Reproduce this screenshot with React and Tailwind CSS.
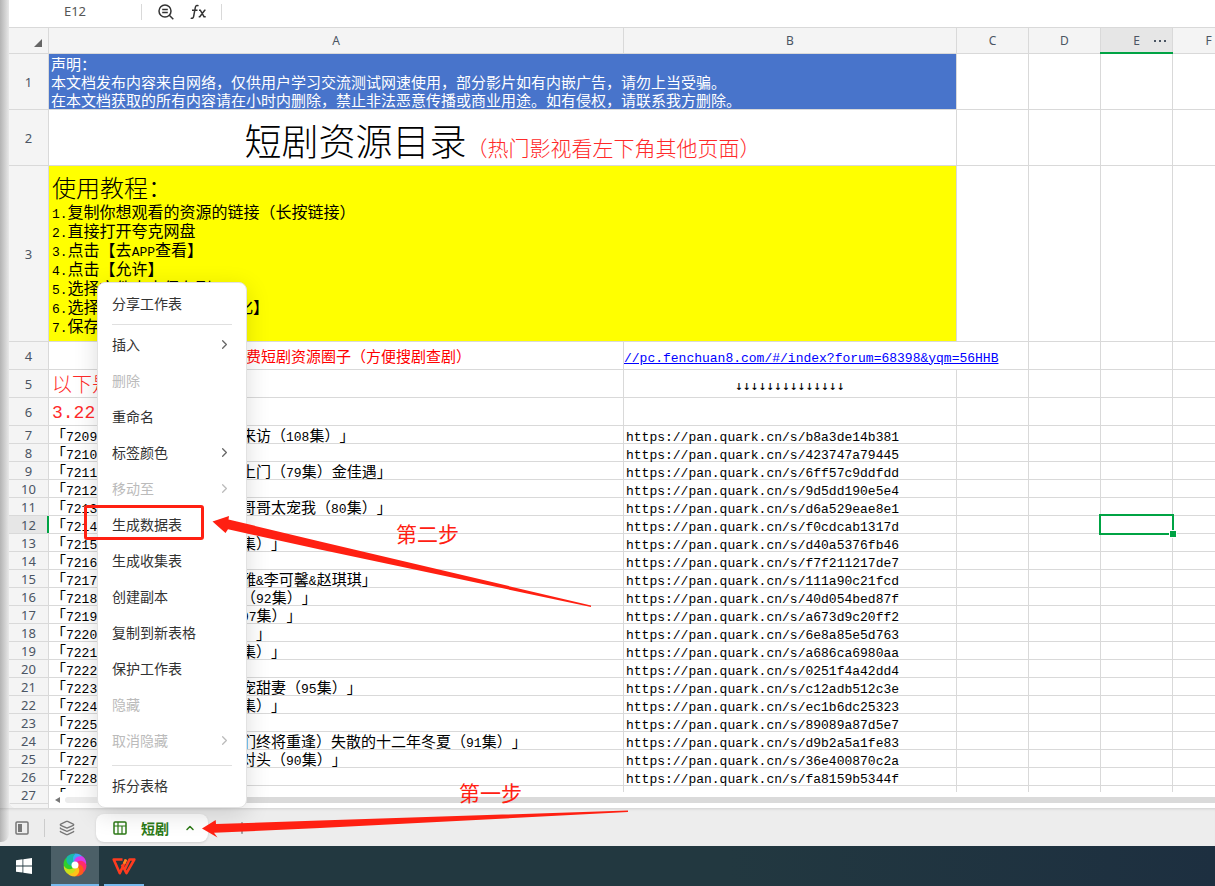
import { Fragment } from 'react'
import { ChevronRight, ChevronUp, Layers, Plus } from 'lucide-react'

const columns = ['C', 'D', 'E', 'F']

const records = [
  { row: 7, id: '7209', tail: '来访（108集）」', code: 'b8a3de14b381' },
  { row: 8, id: '7210', tail: '', code: '423747a79445' },
  { row: 9, id: '7211', tail: '上门（79集）金佳遇」', code: '6ff57c9ddfdd' },
  { row: 10, id: '7212', tail: '', code: '9d5dd190e5e4' },
  { row: 11, id: '7213', tail: '哥哥太宠我（80集）」', code: 'd6a529eae8e1' },
  { row: 12, id: '7214', tail: '', code: 'f0cdcab1317d' },
  { row: 13, id: '7215', tail: '集）」', code: 'd40a5376fb46' },
  { row: 14, id: '7216', tail: '', code: 'f7f211217de7' },
  { row: 15, id: '7217', tail: '雅&李可馨&赵琪琪」', code: '111a90c21fcd' },
  { row: 16, id: '7218', tail: '（92集）」', code: '40d054bed87f' },
  { row: 17, id: '7219', tail: '97集）」', code: 'a673d9c20ff2' },
  { row: 18, id: '7220', tail: '）」', code: '6e8a85e5d763' },
  { row: 19, id: '7221', tail: '集）」', code: 'a686ca6980aa' },
  { row: 20, id: '7222', tail: '」', code: '0251f4a42dd4' },
  { row: 21, id: '7223', tail: '宠甜妻（95集）」', code: 'c12adb512c3e' },
  { row: 22, id: '7224', tail: '集）」', code: 'ec1b6dc25323' },
  { row: 23, id: '7225', tail: '', code: '89089a87d5e7' },
  { row: 24, id: '7226', tail: '们终将重逢）失散的十二年冬夏（91集）」', code: 'd9b2a5a1fe83' },
  { row: 25, id: '7227', tail: '对头（90集）」', code: '36e400870c2a' },
  { row: 26, id: '7228', tail: '', code: 'fa8159b5344f' },
  { row: 27, id: '7229', tail: '」', code: '15f304434941' },
]

const menuGroups = [
  [{ label: '分享工作表' }],
  [
    { label: '插入', sub: true },
    { label: '删除', disabled: true },
    { label: '重命名' },
    { label: '标签颜色', sub: true },
    { label: '移动至', sub: true, disabled: true },
    { label: '生成数据表' },
    { label: '生成收集表' },
    { label: '创建副本' },
    { label: '复制到新表格' },
    { label: '保护工作表' },
    { label: '隐藏', disabled: true },
    { label: '取消隐藏', sub: true, disabled: true },
  ],
  [{ label: '拆分表格' }],
]

const cell = 'border-r border-b border-[#d9d9d9] p-0'
const mono = "font-['Liberation_Mono',monospace] text-[13px] leading-none"

// Latin runs are set smaller so two of them take the room of one Chinese character
function Mixed({ text }) {
  return text.split(/([\x20-\x7e]+)/).map((part, i) =>
    i % 2 ? (
      <span key={i} className={mono}>{part}</span>
    ) : (
      <Fragment key={i}>{part}</Fragment>
    )
  )
}

function RowHeader({ n, active }) {
  return (
    <th
      scope="row"
      className={`${cell} relative text-center font-['Noto_Sans'] text-[13px] leading-4 font-normal text-[#4b5563] ${
        active ? 'bg-[#e6e6e6]' : 'bg-[#f4f4f4]'
      }`}
    >
      {n}
      {active && <span className="absolute inset-y-0 -right-px w-[2px] bg-[#00a344]" />}
    </th>
  )
}

function EmptyCells({ from = 0, selected }) {
  return columns.slice(from).map((name) => (
    <td key={name} className={`${cell} relative`}>
      {selected && name === 'E' && (
        <div className="absolute -inset-[2px] z-10 border-2 border-[#00a344]">
          <span className="absolute -right-[5px] -bottom-[5px] h-2 w-2 border border-white bg-[#00a344]" />
        </div>
      )}
    </td>
  ))
}

function Toolbar() {
  return (
    <div className="flex h-7 shrink-0 items-center border-b border-[#d9d9d9] bg-white pb-1">
      <input
        aria-label="Name box"
        defaultValue="E12"
        className="w-[132px] text-center font-['Noto_Sans'] text-[13px] text-[#555] outline-none"
      />
      <span className="h-4 w-px bg-[#d9d9d9]" />
      <button aria-label="Search" className="ml-4 text-[#333]">
        <svg width="16" height="16" viewBox="0 0 16 16" fill="none" stroke="currentColor" strokeWidth="1.5">
          <circle cx="7" cy="7" r="6" />
          <path d="M4.200 5.500h5.600M4.200 8.500h5.600M11.300 11.300l4 4" />
        </svg>
      </button>
      <button aria-label="Insert function" className="ml-4 text-[#333]">
        <svg width="17" height="16" viewBox="0 0 17 16" fill="none" stroke="currentColor" strokeWidth="1.5">
          <path d="M8.500 1.800C6.700 1 5.600 1.700 5.300 3.500L3.700 12.200C3.400 14 2.300 14.800 .7 14.100M2 6.200h5.500M9 6.200h1.300l3.700 6.500h1.700M15.500 6.200h-.8L9.800 12.700H8.700" />
        </svg>
      </button>
      <span className="ml-[14px] h-4 w-px bg-[#d9d9d9]" />
      <input aria-label="Formula" className="min-w-0 flex-1 px-2 outline-none" />
    </div>
  )
}

function Sheet() {
  return (
    <div className="relative min-h-0 flex-1 overflow-hidden">
      <table className="w-[1236px] table-fixed border-separate border-spacing-0 text-[15px] text-black [text-spacing-trim:space-all]">
        <colgroup>
          <col className="w-[40px]" />
          <col className="w-[575px]" />
          <col className="w-[333px]" />
          <col className="w-[72px]" />
          <col className="w-[72px]" />
          <col className="w-[72px]" />
          <col className="w-[72px]" />
        </colgroup>
        <thead>
          <tr className="h-[26px] bg-[#f4f4f4] font-['Noto_Sans'] text-xs text-[#4b5563]">
            <th className={cell}>
              <svg className="mt-1 mr-[6px] ml-auto" width="8" height="8" viewBox="0 0 8 8">
                <path d="M8 0v8H0z" fill="#666" />
              </svg>
            </th>
            {['A', 'B', ...columns].map((name) => (
              <th
                key={name}
                scope="col"
                className={`${cell} relative font-normal ${name === 'E' ? 'bg-[#e6e6e6]' : ''}`}
              >
                {name}
                {name === 'E' && (
                  <>
                    <span className="absolute inset-y-0 right-[6px] flex items-center gap-[3px]">
                      <i className="h-[2px] w-[2px] bg-[#4b5563]" />
                      <i className="h-[2px] w-[2px] bg-[#4b5563]" />
                      <i className="h-[2px] w-[2px] bg-[#4b5563]" />
                    </span>
                    <span className="absolute -inset-x-px -bottom-px h-[2px] bg-[#00a344]" />
                  </>
                )}
              </th>
            ))}
          </tr>
        </thead>
        <tbody>
          <tr className="h-14">
            <RowHeader n={1} />
            <td colSpan={2} className={`${cell} bg-[#4874cb] pl-[2px] leading-[18px] text-white`}>
              <p>声明：</p>
              <p>本文档发布内容来自网络，仅供用户学习交流测试网速使用，部分影片如有内嵌广告，请勿上当受骗。</p>
              <p>在本文档获取的所有内容请在小时内删除，禁止非法恶意传播或商业用途。如有侵权，请联系我方删除。</p>
            </td>
            <EmptyCells />
          </tr>
          <tr className="h-14">
            <RowHeader n={2} />
            <td colSpan={2} className={`${cell} pt-1 text-center text-[37px] leading-[48px] font-light`}>
              短剧资源目录
              <span className="text-[21px] leading-none text-[#ff2a2a]">（热门影视看左下角其他页面）</span>
            </td>
            <EmptyCells />
          </tr>
          <tr className="h-44">
            <RowHeader n={3} />
            <td colSpan={2} className={`${cell} bg-[#ffff00] pl-[3px] text-base leading-[19px]`}>
              <p className="text-2xl leading-[30px] font-light">使用教程：</p>
              <p><Mixed text="1.复制你想观看的资源的链接（长按链接）" /></p>
              <p><Mixed text="2.直接打开夸克网盘" /></p>
              <p><Mixed text="3.点击【去APP查看】" /></p>
              <p><Mixed text="4.点击【允许】" /></p>
              <p><Mixed text="5.选择文件点击保存到" /></p>
              <p className="flex">
                <span className="w-[185px]"><Mixed text="6.选择" /></span>
                化】
              </p>
              <p><Mixed text="7.保存" /></p>
            </td>
            <EmptyCells />
          </tr>
          <tr className="h-7">
            <RowHeader n={4} />
            <td className={`${cell} text-center leading-[18px] text-[#ff0000]`}>夸克免费短剧资源圈子（方便搜剧查剧）</td>
            <td colSpan={2} className={`${cell} leading-[18px]`}>
              <a href="#forum" className={`${mono} text-[#0000ff] underline`}>
                //pc.fenchuan8.com/#/index?forum=68398&yqm=56HHB
              </a>
            </td>
            <EmptyCells from={1} />
          </tr>
          <tr className="h-7">
            <RowHeader n={5} />
            <td className={`${cell} pl-[3px] text-xl leading-6 font-light text-[#ff2a2a]`}>以下是</td>
            <td className={`${cell} pt-1 text-center font-['DejaVu_Sans_Mono',monospace] text-[13px] leading-[18px]`}>
              ↓↓↓↓↓↓↓↓↓↓↓↓↓↓
            </td>
            <EmptyCells />
          </tr>
          <tr className="h-7">
            <RowHeader n={6} />
            <td className={`${cell} pt-[3px] pl-[3px] font-['Liberation_Mono',monospace] text-lg leading-6 text-[#ff2a2a]`}>
              3.22
            </td>
            <td className={cell} />
            <EmptyCells />
          </tr>
          {records.map(({ row, id, tail, code }) => (
            <tr key={row} className="h-[18px]">
              <RowHeader n={row} active={row === 12} />
              <td className={`${cell} leading-[17px]`}>
                <div className="flex h-[17px] whitespace-nowrap">
                  <span className="w-[192px] pl-[2px]"><Mixed text={`「${id}`} /></span>
                  <span><Mixed text={tail} /></span>
                </div>
              </td>
              <td className={`${cell} pl-[2px] leading-[17px]`}>
                <div className="h-[17px]"><Mixed text={`https://pan.quark.cn/s/${code}`} /></div>
              </td>
              <EmptyCells selected={row === 12} />
            </tr>
          ))}
          <tr className="h-[18px]">
            <RowHeader />
            <td colSpan={6} />
          </tr>
        </tbody>
      </table>
      {/* horizontal scrollbar covers the end of the grid */}
      <div className="absolute right-0 bottom-0 left-10 flex h-4 items-center bg-white pl-[6px]">
        <svg width="5" height="6" viewBox="0 0 5 6"><path d="M5 0v6L0 3z" fill="#777" /></svg>
        <span className="ml-[5px] h-[6px] w-24 rounded-l-full bg-[#ececec]" />
        <span className="h-[6px] flex-1 bg-[#dadada]" />
      </div>
    </div>
  )
}

function ContextMenu() {
  return (
    <div
      role="menu"
      className="absolute bottom-full left-[97px] z-20 w-[150px] rounded-lg border border-[#e2e2e2] bg-white px-[14px] pt-[2px] pb-1 text-sm text-[#333] shadow-[0_6px_24px_rgba(0,0,0,0.14)]"
    >
      {menuGroups.map((group, i) => (
        <div key={i}>
          {i > 0 && <hr className={`mb-px border-[#e0e0e0] ${i === 2 ? 'mt-[7px]' : 'mt-[3px]'}`} />}
          {group.map((item) => (
            <button
              key={item.label}
              role="menuitem"
              disabled={item.disabled}
              className="flex h-9 w-full items-center justify-between disabled:text-[#bbb]"
            >
              {item.label}
              {item.sub && <ChevronRight className="text-[#666] in-disabled:text-[#bbb]" size={15} strokeWidth={2} />}
            </button>
          ))}
        </div>
      ))}
    </div>
  )
}

function TabBar() {
  return (
    <div className="relative flex h-[38px] shrink-0 items-center pt-[2px] shadow-[inset_0_3px_3px_-2px_rgba(0,0,0,0.12)]">
      <ContextMenu />
      <button aria-label="Toggle side panel" className="ml-[15px] text-[#777]">
        <svg width="14" height="14" viewBox="0 0 14 14" fill="none" stroke="currentColor" strokeWidth="1.5">
          <rect x="1" y="1" width="12" height="12" rx="1" />
          <path d="M3 3h4v8H3z" fill="currentColor" stroke="none" />
        </svg>
      </button>
      <span className="ml-[15px] h-[18px] w-px bg-[#ccc]" />
      <button aria-label="All sheets" className="ml-[14px] text-[#777]"><Layers size={16} strokeWidth={2} /></button>
      <button className="ml-[21px] flex h-7 w-28 items-center rounded-lg bg-white pl-[17px] text-sm font-bold text-[#2c7a16] shadow-sm">
        <svg width="14" height="14" viewBox="0 0 14 14" fill="none" stroke="currentColor" strokeWidth="1.5">
          <rect x="1" y="1" width="12" height="12" rx="1" />
          <path d="M5 1v12M1 5h12M9 5v8" strokeWidth="1.200" />
        </svg>
        <span className="ml-[14px]">短剧</span>
        <ChevronUp className="ml-[15px]" size={12} strokeWidth={3} />
      </button>
      <button aria-label="Add sheet" className="ml-[25px] text-[#777]"><Plus size={18} strokeWidth={1.75} /></button>
    </div>
  )
}

function Taskbar() {
  return (
    <div className="flex h-10 shrink-0 bg-linear-to-r from-[#223840] from-60% to-[#1d2f40]">
      <button aria-label="Start" className="flex w-[51px] items-center pl-4">
        <svg width="16" height="16" viewBox="0 0 16 16" fill="#fff">
          <path d="M0 2.200l6.500-.9v6.200H0zM7.300 1.200L16 0v7.500H7.300zM0 8.400h6.500v6.200L0 13.700zM7.300 8.400H16V16l-8.700-1.200z" />
        </svg>
      </button>
      <button aria-label="Browser" className="flex w-12 items-center justify-center border-b-2 border-[#76b9ed] bg-[#4b5f67]">
        <svg width="24" height="24" viewBox="0 0 24 24">
          {['#3fa9f5', '#d63bea', '#ff2d6b', '#ff5a1e', '#ffc21a', '#c8e01c', '#2fd02c', '#19b8a8'].map((color, i) => (
            <path
              key={color}
              d="M12 12C6.500 10 6 3.500 12 .5c4 0 6.500 1.500 8 4-3.500-.5-6.500 2-8 7.500z"
              fill={color}
              transform={`rotate(${i * 45} 12 12)`}
            />
          ))}
          <circle cx="12" cy="12" r="3.500" fill="#fff" />
        </svg>
      </button>
      <button aria-label="WPS Office" className="ml-[5px] flex w-10 items-center justify-center border-b-2 border-[#76b9ed] pt-[2px]">
        <svg width="24" height="17" viewBox="0 0 24 17" fill="none" stroke="#ff3b1f" strokeWidth="2.600" strokeLinejoin="round">
          <path d="M10.500 1.500H1.700L7.800 15.200 14 1.500" />
          <path d="M9.800 6.500L14.500 15.200 22.300 1.500H17.500L13 11" />
          <path d="M12 5.800L14 1.500" stroke="#ff8a1f" />
        </svg>
      </button>
    </div>
  )
}

function Annotations() {
  return (
    <div className="pointer-events-none absolute inset-0 z-30 overflow-hidden text-[21px] leading-6 text-[#ff2012]">
      <svg className="absolute top-0 left-0" width="640" height="850" viewBox="0 0 640 850" fill="#ff2012">
        <rect x="85.500" y="506.500" width="117" height="32" rx="1.500" fill="none" stroke="#ff2012" strokeWidth="3" />
        <path d="M212.500 521.500L229 516l-.5 3.500L320 541.500 591 605.500v1.500L320 549.500 228 529.200 225.500 533z" />
        <path d="M202 828.500L215.700 820l.3 4L320 820.500 628 810.500v1.500L320 828 214 832.800 217.500 837.500z" />
      </svg>
      <span className="absolute top-[521px] left-[396px]">第二步</span>
      <span className="absolute top-[780px] left-[459px]">第一步</span>
    </div>
  )
}

export default function App() {
  return (
    <div className="relative flex h-screen flex-col overflow-hidden bg-[#ededed] font-['Noto_Sans_CJK_SC',sans-serif]">
      <div className="flex min-h-0 flex-1">
        <div className="mb-1 w-[9px] shrink-0 rounded-br-lg bg-linear-to-r from-[#b4b4b4] to-[#e8e8e8]" />
        <div className="-ml-[9px] flex min-w-0 flex-1 flex-col">
          <div className="ml-[9px] flex min-h-0 flex-1 flex-col overflow-hidden rounded-bl-lg bg-white">
            <Toolbar />
            <Sheet />
          </div>
          <TabBar />
        </div>
      </div>
      <Taskbar />
      <Annotations />
    </div>
  )
}
